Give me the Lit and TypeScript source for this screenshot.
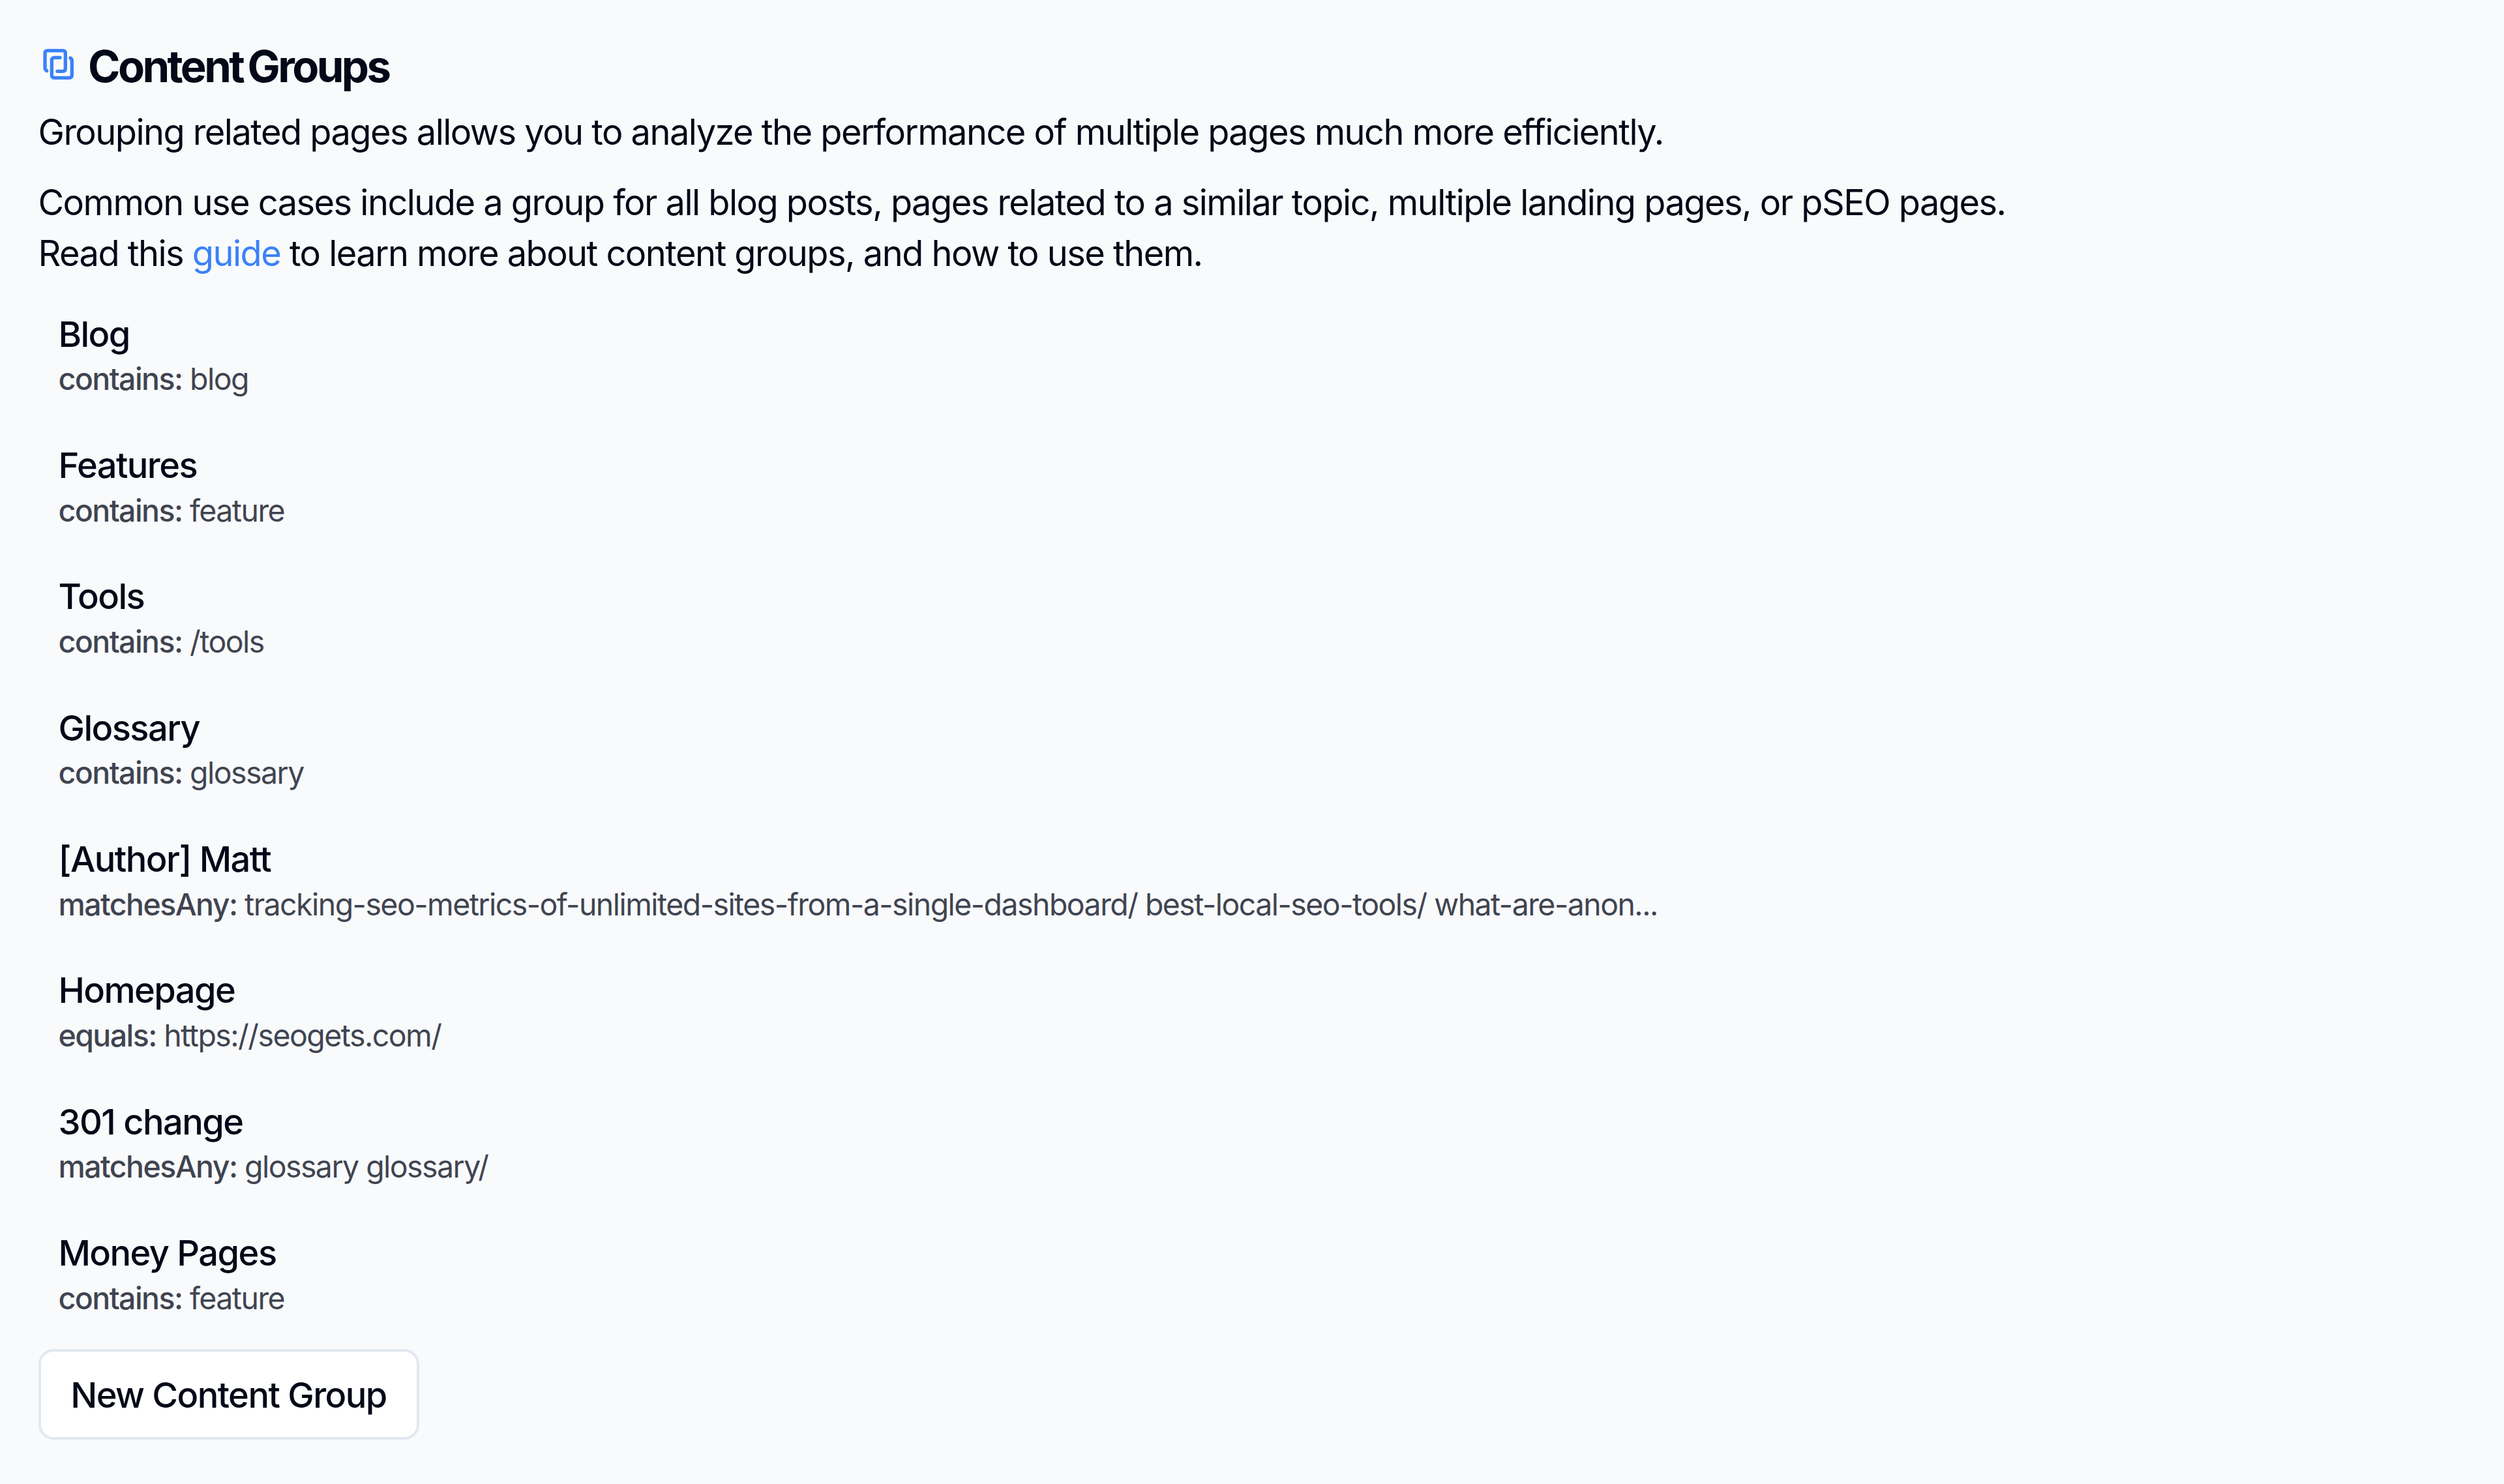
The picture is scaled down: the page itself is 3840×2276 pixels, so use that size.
import { LitElement, html, css } from 'lit';
import { customElement, property } from 'lit/decorators.js';

interface ContentGroup {
  name: string;
  operator: string;
  value: string;
}

const GROUPS: ContentGroup[] = [
  { name: 'Blog', operator: 'contains', value: 'blog' },
  { name: 'Features', operator: 'contains', value: 'feature' },
  { name: 'Tools', operator: 'contains', value: '/tools' },
  { name: 'Glossary', operator: 'contains', value: 'glossary' },
  {
    name: '[Author] Matt',
    operator: 'matchesAny',
    value: 'tracking-seo-metrics-of-unlimited-sites-from-a-single-dashboard/ best-local-seo-tools/ what-are-anon...',
  },
  { name: 'Homepage', operator: 'equals', value: 'https://seogets.com/' },
  { name: '301 change', operator: 'matchesAny', value: 'glossary glossary/' },
  { name: 'Money Pages', operator: 'contains', value: 'feature' },
];

@customElement('content-group-item')
export class ContentGroupItem extends LitElement {
  static styles = css`
    :host {
      display: block;
      padding: 30.98px;
    }
    .name {
      font-size: 54.2px;
      line-height: 77.44px;
      font-weight: 500;
    }
    .rule {
      font-size: 46.46px;
      line-height: 61.95px;
      opacity: 0.75;
      white-space: nowrap;
    }
    .operator { font-weight: 500; }
  `;

  @property({ attribute: false }) group!: ContentGroup;

  render() {
    return html`
      <div class="name">${this.group.name}</div>
      <div class="rule"><span class="operator">${this.group.operator}:</span> ${this.group.value}</div>
    `;
  }
}

@customElement('app-root')
export class AppRoot extends LitElement {
  static styles = css`
    :host {
      display: block;
      box-sizing: border-box;
      height: 2276px;
      padding: 62px 58.5px 0;
      background: #f9fafc;
      color: #020817;
      font-family: Inter, "Liberation Sans", sans-serif;
      font-optical-sizing: none;
      letter-spacing: -1.549px;
    }
    header {
      display: flex;
      align-items: center;
      height: 77.4px;
      margin-bottom: 24.7px;
      padding-left: 7px;
      gap: 22.2px;
    }
    .icon {
      width: 47.3px;
      height: 47.3px;
      margin-bottom: 4px;
      fill: none;
      stroke: #3b82f6;
      stroke-width: 16;
      stroke-linecap: round;
      stroke-linejoin: round;
    }
    h1 {
      margin: 0;
      font-size: 67px;
      font-weight: 700;
      line-height: 77.4px;
      letter-spacing: -3.6px;
      word-spacing: -5px;
      padding-top: 1px;
    }
    p {
      margin: 0 0 30.98px;
      font-size: 54.2px;
      line-height: 77.44px;
    }
    p.last { margin-bottom: 15.5px; }
    a {
      color: #3b82f6;
      text-decoration: none;
    }
    button {
      display: flex;
      align-items: center;
      justify-content: center;
      box-sizing: border-box;
      width: 584px;
      height: 139.4px;
      margin-top: 15.5px;
      padding: 0;
      border: 4px solid #e2e8f0;
      border-radius: 23px;
      background: #fff;
      color: inherit;
      font: inherit;
      font-size: 54.2px;
      font-weight: 500;
      letter-spacing: inherit;
      white-space: nowrap;
    }
  `;

  render() {
    return html`
      <header>
        <svg class="icon" viewBox="46 45 142 142">
          <path d="M63 146L58 141Q55 138 55 132V65Q55 53 67 53H137Q149 53 149 65V135Q149 148 137 148H112" />
          <path d="M124 85H99Q86 85 86 98V166Q86 178 98 178H167Q179 178 179 166V98Q179 92 172 87" />
        </svg>
        <h1>Content Groups</h1>
      </header>
      <p>Grouping related pages allows you to analyze the performance of multiple pages much more efficiently.</p>
      <p class="last">
        Common use cases include a group for all blog posts, pages related to a similar topic, multiple landing pages, or pSEO pages.<br />
        Read this <a href="#">guide</a> to learn more about content groups, and how to use them.
      </p>
      ${GROUPS.map((group) => html`<content-group-item .group=${group}></content-group-item>`)}
      <button>New Content Group</button>
    `;
  }
}
